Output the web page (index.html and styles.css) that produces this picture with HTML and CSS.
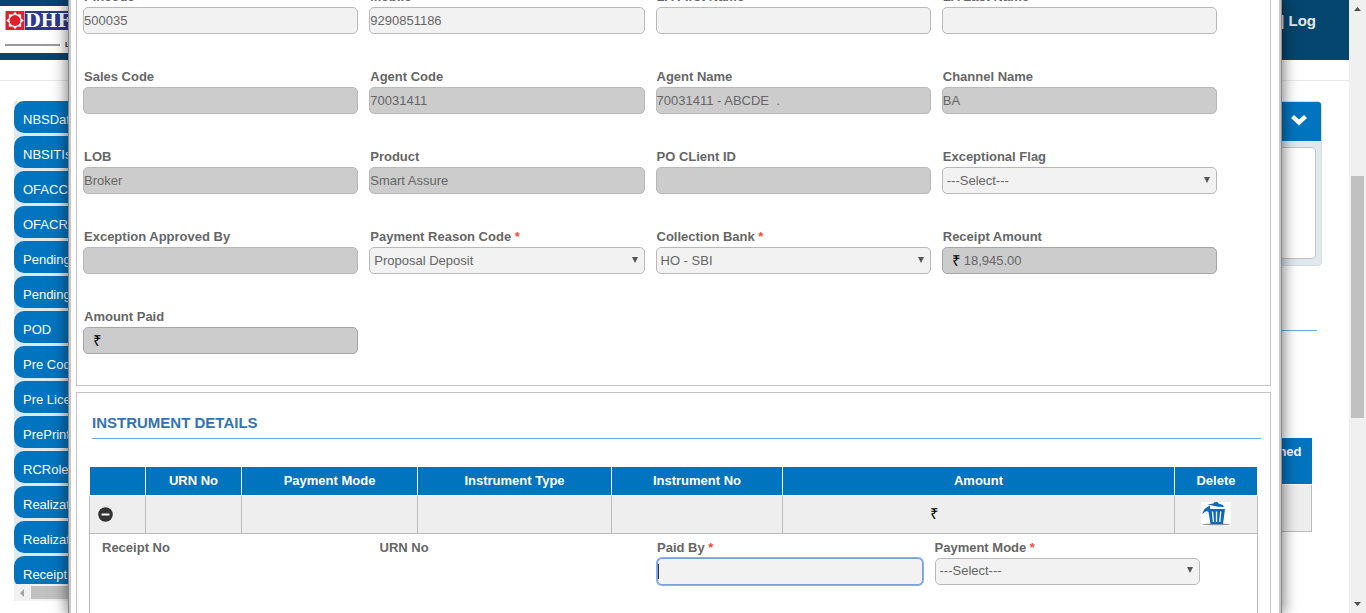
FILE: index.html
```html
<!DOCTYPE html>
<html lang="en">
<head>
<meta charset="utf-8">
<title>Receipt Entry</title>
<link rel="stylesheet" href="styles.css">
</head>
<body>
<div class="window">
  <div class="page">
    <header class="topbar">
      <div class="logo">
        <div class="logo-row">
          <svg class="sun" viewBox="0 0 20 20" aria-hidden="true">
            <rect width="20" height="20" fill="#e31e2b"/>
            <path d="M10 .8l2.300 2.800 4.200-.1-.1 4.200L19.200 10l-2.800 2.300.1 4.200-4.200-.1L10 19.200l-2.300-2.800-4.200.1.1-4.200L.8 10l2.800-2.300-.1-4.200 4.200.1z" fill="#fff"/>
            <circle cx="10" cy="10" r="5.700" fill="#e31e2b"/>
          </svg>
          <span class="brand">DHFL</span>
        </div>
        <div class="logo-sub"><span class="rule"></span><span>LIFE</span></div>
      </div>
      <a class="logout" href="#">| Log</a>
    </header>
    <div class="strip"></div>
    <div class="main">
      <nav class="side">
        <ul>
          <li><a href="#">NBSData</a></li>
          <li><a href="#">NBSITIs</a></li>
          <li><a href="#">OFACC</a></li>
          <li><a href="#">OFACR</a></li>
          <li><a href="#">Pending</a></li>
          <li><a href="#">Pending</a></li>
          <li><a href="#">POD</a></li>
          <li><a href="#">Pre Code</a></li>
          <li><a href="#">Pre Lice</a></li>
          <li><a href="#">PrePrint</a></li>
          <li><a href="#">RCRole</a></li>
          <li><a href="#">Realizat</a></li>
          <li><a href="#">Realizat</a></li>
          <li><a href="#">Receipt</a></li>
        </ul>
        <div class="hbar"><svg viewBox="0 0 17 17" width="17" height="17"><path d="M10 5v8L6 9z" fill="#a3a3a3"/></svg><span class="hthumb"></span></div>
      </nav>
      <div class="content">
        <section class="panel">
          <div class="panel-head"><svg viewBox="0 0 16 12" width="16" height="12"><path d="M0 4l3-3 5 4.500L13 1l3 3-8 7.500z" fill="#fff"/></svg></div>
          <div class="panel-body"></div>
        </section>
        <hr class="line back-line">
        <table class="back-table">
          <thead><tr><th>Returned</th></tr></thead>
          <tbody><tr><td></td></tr></tbody>
        </table>
      </div>
    </div>
    <div class="modal" role="dialog" aria-label="Receipt">
      <div class="modal-body">
        <section class="box first">
          <form class="grid">
            <div class="field"><label for="f1">Pincode</label><input id="f1" value="500035"></div>
            <div class="field"><label for="f2">Mobile</label><input id="f2" value="9290851186"></div>
            <div class="field"><label for="f3">LA First Name</label><input id="f3"></div>
            <div class="field"><label for="f4">LA Last Name</label><input id="f4"></div>
            <div class="field"><label for="f5">Sales Code</label><input id="f5" disabled></div>
            <div class="field"><label for="f6">Agent Code</label><input id="f6" value="70031411" disabled></div>
            <div class="field"><label for="f7">Agent Name</label><input id="f7" value="70031411 - ABCDE  ." disabled></div>
            <div class="field"><label for="f8">Channel Name</label><input id="f8" value="BA" disabled></div>
            <div class="field"><label for="f9">LOB</label><input id="f9" value="Broker" disabled></div>
            <div class="field"><label for="f10">Product</label><input id="f10" value="Smart Assure" disabled></div>
            <div class="field"><label for="f11">PO CLient ID</label><input id="f11" disabled></div>
            <div class="field"><label for="f12">Exceptional Flag</label><div class="pick"><select id="f12"><option>---Select---</option></select></div></div>
            <div class="field"><label for="f13">Exception Approved By</label><input id="f13" disabled></div>
            <div class="field"><label for="f14">Payment Reason Code <b class="req">*</b></label><div class="pick"><select id="f14"><option>Proposal Deposit</option></select></div></div>
            <div class="field"><label for="f15">Collection Bank <b class="req">*</b></label><div class="pick"><select id="f15"><option>HO - SBI</option></select></div></div>
            <div class="field"><label for="f16">Receipt Amount</label><div class="money"><span>₹</span><input id="f16" value="18,945.00" disabled></div></div>
            <div class="field"><label for="f17">Amount Paid</label><div class="money"><span>₹</span><input id="f17" disabled></div></div>
          </form>
        </section>
        <section class="box second">
          <h2>INSTRUMENT DETAILS</h2>
          <table class="inst">
            <colgroup><col class="c1"><col class="c2"><col class="c3"><col class="c4"><col class="c5"><col><col class="c7"></colgroup>
            <thead><tr><th></th><th>URN No</th><th>Payment Mode</th><th>Instrument Type</th><th>Instrument No</th><th>Amount</th><th>Delete</th></tr></thead>
            <tbody>
              <tr class="row">
                <td><button class="icon minus" type="button" aria-label="Collapse"><svg viewBox="0 0 15 15" width="15" height="15"><circle cx="7.500" cy="7.500" r="7.300" fill="#333"/><rect x="3.500" y="6.500" width="8" height="2" rx=".5" fill="#fff"/></svg></button></td>
                <td></td><td></td><td></td><td></td>
                <td class="rupee">₹</td>
                <td><button class="icon bin" type="button" aria-label="Delete"><svg viewBox="0 0 30 24" width="30" height="24">
                  <rect width="30" height="24" fill="#fff"/>
                  <ellipse cx="15" cy="22.400" rx="14" ry=".9" fill="#8f8f8f"/>
                  <path d="M7 7h17L22 22H9.500z" fill="#0b6bb8"/>
                  <path d="M11.500 9.500l1 10.500M15.500 9.500V20M19.700 9.500l-.9 10.500" stroke="#fff" stroke-width="1.300"/>
                  <path d="M6.500 2.500l6-1L13 .3l3.500-.3 1 1.500 4.500 1.500 1 2-6-.2z" fill="#0b6bb8"/>
                  <path d="M9.500 5.500L8 10 5.500 9 1 12l2.500-5 5-3.500z" fill="#0b6bb8"/>
                  <path d="M9.500 5.500l14 1" stroke="#fff" stroke-width=".8"/>
                </svg></button></td>
              </tr>
              <tr class="detail"><td colspan="7">
                <div class="sub">
                  <div class="field"><span class="lbl">Receipt No</span></div>
                  <div class="field"><span class="lbl">URN No</span></div>
                  <div class="field"><label for="g1">Paid By <b class="req">*</b></label><input id="g1" class="active"></div>
                  <div class="field"><label for="g2">Payment Mode <b class="req">*</b></label><div class="pick"><select id="g2"><option>---Select---</option></select></div></div>
                </div>
              </td></tr>
            </tbody>
          </table>
        </section>
      </div>
    </div>
  </div>
  <div class="vbar" aria-hidden="true">
    <svg viewBox="0 0 17 17" width="17" height="17"><path d="M5 11h7L8.500 7z" fill="#505050"/></svg>
    <div class="track"><span class="vthumb"></span></div>
    <svg viewBox="0 0 17 17" width="17" height="17"><path d="M5 6h7l-3.500 4z" fill="#505050"/></svg>
  </div>
</div>
</body>
</html>
```
FILE: styles.css
```css
* { box-sizing: border-box; }
body { margin: 0; font: 13px/20px "Liberation Sans", Arial, sans-serif; color: #666; background: #fff; }
a { text-decoration: none; color: inherit; }
.window { display: grid; grid-template-columns: 1fr 17px; height: 100vh; overflow: hidden; }
.page { position: relative; overflow: hidden; min-width: 0; }

.topbar { display: flex; justify-content: space-between; align-items: flex-start; height: 60px; background: #05466e; padding-top: 6px; }
.logo { width: 180px; height: 47px; background: #fff; padding: 5px; }
.logo-row { display: flex; height: 19px; }
.sun { width: 20px; height: 19px; }
.brand { background: #2b3a8c; color: #fff; font: bold 18px/19px "DejaVu Serif", serif; }
.logo-sub { display: flex; align-items: center; gap: 5px; height: 10px; margin-top: 10px; font: bold 8px/10px "Liberation Sans", sans-serif; color: #333; }
.rule { width: 55px; height: 2px; background: #999; }
.logout { color: #e6e9ec; font-weight: bold; font-size: 15px; padding: 5px 33px 0 0; }
.strip { height: 21px; border-bottom: 1px solid #e8e8e8; }

.main { display: flex; gap: 20px; padding: 20px 27px 0 14px; }
.side { width: 220px; flex: none; }
.side ul { margin: 0; padding: 0; list-style: none; display: flex; flex-direction: column; gap: 3px; height: 483px; overflow: hidden; background: #e1e9f0; }
.side li { flex: none; }
.side a { display: block; height: 32px; padding: 2px 9px 0; line-height: 34px; background: #0074bf; color: #fff; border-radius: 10px 0 0 10px; }
.hbar { display: flex; align-items: center; background: #f1f1f1; height: 17px; }
.hthumb { width: 150px; height: 13px; background: #c1c1c1; }

.content { flex: 1; min-width: 0; }
.panel { border: 1px solid #dbdbdb; border-radius: 4px; background: #e1e9f0; overflow: hidden; }
.panel-head { display: flex; align-items: center; justify-content: flex-end; height: 39px; padding: 0 14px 4px; background: #0074bf; }
.panel-body { height: 112px; margin: 6px 5px; background: #fff; border: 1px solid #c4c4c4; border-radius: 4px; }
.line { height: 1px; border: 0; background: #6aade4; margin: 0; }
.back-line { margin: 64px 5px 107px 0; }
.back-table { width: calc(100% - 10px); border-collapse: collapse; }
.back-table th { height: 46px; background: #0074bf; color: #fff; text-align: right; vertical-align: top; padding: 4px 10px; border-bottom: 1px solid #fff; }
.back-table td { height: 47px; background: #eee; border: 1px solid #bbb; border-top: 0; }

.modal { position: absolute; top: 0; bottom: 0; left: 69px; right: 68px; background: #fff; border: solid #c6c6c6; border-width: 0 2px; box-shadow: 0 0 0 1px #888, 0 0 14px 2px rgba(0, 0, 0, .55); }
.modal-body { height: 100%; overflow: hidden; padding: 0 8px 0 5px; display: flex; flex-direction: column; gap: 6px; }
.box { border: 1px solid #c4c4c4; flex: none; }
.first { margin-top: -14px; padding: 0 53px 31px 6px; }
.grid { display: grid; grid-template-columns: repeat(4, minmax(0, 1fr)); gap: 33px 11px; }
.field { display: flex; flex-direction: column; min-width: 0; }
label, .lbl { font-weight: bold; padding-left: 1px; }
.req { color: #f0503c; }
input, select { width: 100%; height: 27px; margin: 0; font: inherit; color: #666; background: #f2f2f2; border: 1px solid #b9b9b9; border-radius: 5px; padding: 0; outline: 0; white-space: pre; }
input:disabled { background: #ccc; opacity: 1; }
select { appearance: none; padding: 0 20px 0 4px; display: block; }
.pick { display: grid; align-items: center; }
.pick > select, .pick::after { grid-area: 1 / 1; }
.pick::after { content: ""; justify-self: end; margin: 0 7px 2px 0; border: solid transparent; border-width: 6px 3px 0; border-top-color: #555; pointer-events: none; }
.money { display: grid; align-items: center; }
.money > * { grid-area: 1 / 1; }
.money span { z-index: 1; padding-left: 10px; color: #000; font-size: 15px; }
.money input { padding-left: 21px; border-color: #a6a6a6; }

.second { padding: 21px 9px 0 12px; min-height: 260px; }
h2 { margin: 0 0 28px 3px; padding-bottom: 6px; font-size: 15px; line-height: 18px; color: #3273b3; border-bottom: 1px solid #6aade4; }
.inst { width: calc(100% - 3px); border-collapse: collapse; table-layout: fixed; }
.c1 { width: 56px; }
.c2 { width: 96px; }
.c3 { width: 176px; }
.c4 { width: 194px; }
.c5 { width: 171px; }
.c7 { width: 83px; }
.inst th { height: 28px; padding: 0; background: #0074bf; color: #fff; border: solid #fff; border-width: 0 1px 1px; }
.inst td { border: 1px solid #bbb; padding: 0; }
.row td { height: 38px; background: #eee; text-align: center; }
.row td:first-child { text-align: left; padding-left: 8px; }
.row td.rupee { color: #000; font-size: 15px; padding-right: 88px; }
.icon { display: inline-block; padding: 0; border: 0; background: none; vertical-align: middle; }
.icon svg { display: block; }
.detail td { border-bottom: 0; padding: 4px 57px 40px 12px; }
.sub { display: grid; grid-template-columns: repeat(4, minmax(0, 1fr)); gap: 12px; }
.sub label, .sub .lbl { padding-left: 0; }
.active { box-shadow: 0 0 0 1px #86b1f5; border-color: #7aa0dc; background: linear-gradient(#333, #333) 0 center / 1px 15px no-repeat #f2f2f2; }

.vbar { display: flex; flex-direction: column; background: #f0f0f0; }
.track { flex: 1; padding: 159px 2px 0; }
.vthumb { display: block; height: 242px; background: #c1c1c1; }
```
